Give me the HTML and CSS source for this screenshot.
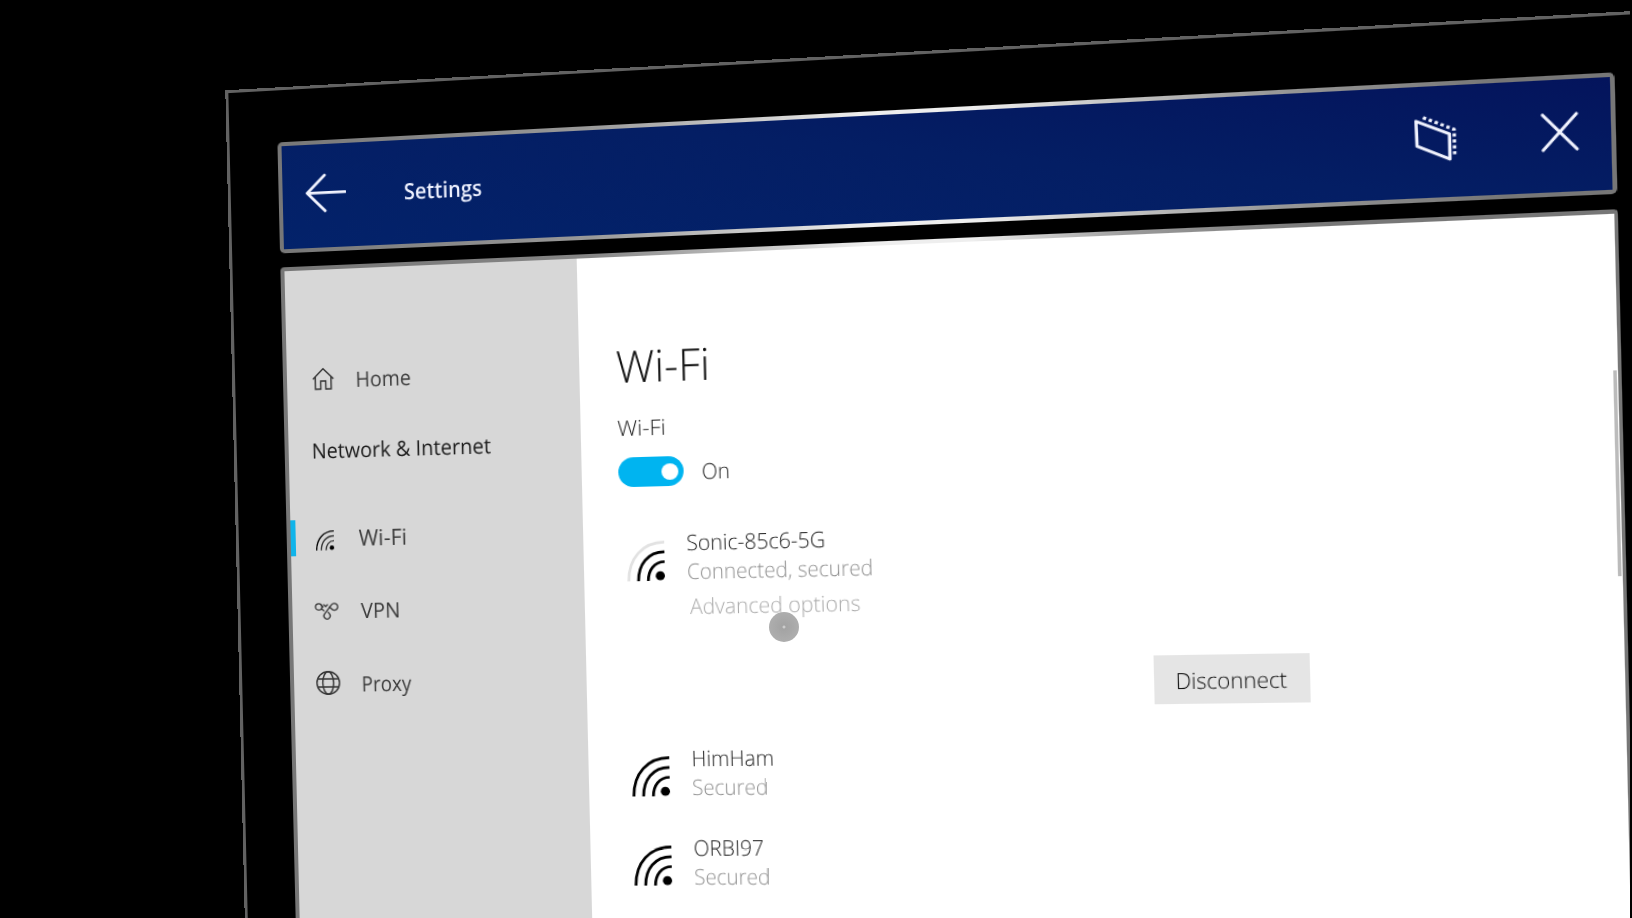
FILE: index.html
```html
<!DOCTYPE html>
<html lang="en">
<head>
<meta charset="utf-8">
<title>Settings</title>
<link rel="stylesheet" href="styles.css">
</head>
<body>
<svg class="defs" width="0" height="0">
  <symbol id="wifi" viewBox="0 0 36 40">
    <path class="arc-far" d="M1.2 39.5C1.2 17 15 1.4 36 1.4"/>
    <path d="M10.6 39.5C10.6 23 20 11 36 11"/>
    <path d="M20 39.5C20 29 26 20.8 36 20.8"/>
    <circle cx="31.6" cy="34.6" r="4.4" fill="#000" stroke="none"/>
  </symbol>
</svg>
<div class="view">
<div class="stage">
  <header class="bar">
    <div class="bar-face">
      <svg class="back" viewBox="0 0 42 42"><path d="M20.5 3 2.5 20.8 20.5 39.5M2.5 20.8H41"/></svg>
      <span class="title fit">Settings</span>
      <svg class="follow" viewBox="0 0 38 44">
        <path d="M2 4.8 31 18.2V42L2.5 28.5Z"/>
        <path class="dots" d="M8.2 1.6 35.2 14.2V37.5"/>
      </svg>
      <svg class="close" viewBox="0 0 32 36"><path d="M1.8 1.8 30.2 34.2M30.2 1.8 1.8 34.2"/></svg>
    </div>
  </header>
  <div class="panel">
    <nav class="side">
      <div class="item home"><svg viewBox="0 0 24 24"><path d="M1.8 12 12 1.8 22.2 12M4.2 10V22H9.5V14H14.5V22H19.8V10"/></svg><span class="fit">Home</span></div>
      <div class="group"><span class="fit">Network &amp; Internet</span></div>
      <div class="item current"><svg class="side-wifi" viewBox="0 0 36 40"><use href="#wifi"/></svg><span class="fit wide">Wi-Fi</span></div>
      <div class="item"><svg class="side-vpn" viewBox="0 0 24 24"><circle cx="4.3" cy="8" r="3.2"/><path d="M7 9.8 9.6 12.4M9 5.6 11.2 7.8 13.4 5.6M6.6 6.2 9 8.4"/><path d="M9.8 15.4 17 6.2A3.4 3.4 0 1 1 17 10.2L14.6 7.8M9.8 15.4A3.1 3.1 0 1 0 14.8 15.2L13.2 13.2"/></svg><span class="fit vpn">VPN</span></div>
      <div class="item"><svg viewBox="0 0 24 24"><circle cx="12" cy="12" r="11.2"/><ellipse cx="12" cy="12" rx="5.4" ry="11.2"/><path d="M1.8 8H22.2M1.8 16H22.2"/></svg><span class="fit proxy">Proxy</span></div>
    </nav>
    <main class="main">
      <h1><span class="fit">Wi-Fi</span></h1>
      <div class="label"><span class="fit label-text">Wi-Fi</span></div>
      <div class="switch"><span class="toggle"><i></i></span><span class="fit on">On</span></div>
      <section class="net weak">
        <svg class="signal"><use href="#wifi"/></svg>
        <div>
          <p class="name"><span class="fit sonic">Sonic-85c6-5G</span></p>
          <p class="state"><span class="fit">Connected, secured</span></p>
          <p class="more"><span class="fit">Advanced options</span></p>
        </div>
      </section>
      <button class="drop"><span class="fit">Disconnect</span></button>
      <section class="net">
        <svg class="signal"><use href="#wifi"/></svg>
        <div><p class="name"><span class="fit">HimHam</span></p><p class="state"><span class="fit">Secured</span></p></div>
      </section>
      <section class="net">
        <svg class="signal"><use href="#wifi"/></svg>
        <div><p class="name"><span class="fit">ORBI97</span></p><p class="state"><span class="fit">Secured</span></p></div>
      </section>
    </main>
    <div class="scroll"></div>
  </div>
</div>
<div class="cursor"></div>
<div class="edge"></div>
</div>
</body>
</html>
```
FILE: styles.css
```css
* { box-sizing: border-box; }
html, body { margin: 0; height: 918px; overflow: hidden; background: #000; }
body { font: 21px/28.2px "Open Sans", "Noto Sans", sans-serif; color: #3c3c3c; }
p, h1 { margin: 0; }
svg { display: block; flex: none; fill: none; stroke: #333; }
.defs { position: absolute; }
.view { position: relative; width: 1632px; height: 918px; overflow: hidden; }
.arc-far { stroke: var(--far, #000); }

/* The whole window is one plane seen in perspective. */
.stage {
  width: 1300px; height: 900px;
  padding: 52.3px 0 0 48px;
  border: solid #626262; border-width: 3px 0 0 3px;
  transform-origin: 0 0;
  transform: matrix3d(0.977, -0.062323, 0, -0.000070725, 0.023417, 0.99645, 0, 0, 0, 0, 1, 0, 225.3, 90.3, 0, 1);
}
.fit { display: inline-block; white-space: nowrap; transform: scaleX(.932); transform-origin: 0 50%; }
.fit.wide { transform: scaleX(1); }

.bar {
  width: 1221px; height: 111px; margin-top: -.8px; padding: 4px; border-radius: 5px;
  background: linear-gradient(90deg, #777 0%, #999 25%, #eee 46%, #eee 54%, #999 76%, #777 92%);
}
.bar-face {
  height: 100%; display: flex; align-items: center;
  padding: 0 27.4px 4.6px 22px;
  background: linear-gradient(8deg, #03226a, #041e64 55%, #04145c);
}
.bar svg { stroke: #f2f4ff; stroke-width: 2.8; stroke-linecap: round; stroke-linejoin: round; }
.bar .back { width: 41px; height: 41px; margin-top: -1px; }
.title { margin-left: 56.6px; padding-top: 2.6px; font-size: 22px; font-weight: 600; color: #eef1ff; }
.title.fit { transform: scaleX(.895); }
.follow { width: 38px; height: 43px; margin-left: auto; }
.bar .dots { stroke-width: 3; stroke-dasharray: 3 2.6; stroke-linecap: butt; }
.bar .close { width: 32px; height: 36px; margin: -1px 0 0 69.8px; }

.panel {
  position: relative; display: flex;
  width: 1221px; height: 744px; margin-top: 14.3px; padding: 4px 3.5px 0;
  border-radius: 4px 4px 0 0;
  background: linear-gradient(90deg, #777 0%, #858585 25%, #eee 46%, #eee 54%, #999 66%, #777 80%);
}
.side { width: 286.4px; padding-top: 94.6px; background: #d7d7d7; line-height: 30px; }
.item { position: relative; display: flex; align-items: center; gap: 21.2px; height: 30px; padding-left: 22.8px; margin-bottom: 42.6px; }
.item svg { width: 24px; height: 24px; stroke-width: 1.4; }
.item .fit, .group .fit { position: relative; top: .6px; }
.item.home { margin-bottom: 39.6px; padding-left: 24.4px; gap: 20.6px; }
.home .fit { transform: scaleX(.92); }
.group .fit { transform: scaleX(.934); }
.group { padding-left: 23px; height: 30px; margin-bottom: 58.2px; color: #1c1c1c; font-weight: 500; }
.current::before { content: ""; position: absolute; left: 0; top: -3.6px; width: 5.6px; height: 36px; background: #10b4ea; }
.item .side-wifi { width: 18px; height: 20px; margin: 5px 3.5px 0 2.5px; stroke-width: 2.6; }
.item .side-vpn { stroke-width: 1.3; margin-left: -.6px; margin-right: 1.4px; }
.fit.vpn { transform: scaleX(.95); }
.fit.proxy { transform: scaleX(.885); }

.main { flex: 1; padding: 79.2px 0 0 34.9px; background: #fff; font-weight: 300; color: #222; }
h1 { font-size: 43px; line-height: 56px; font-weight: 300; color: #111; margin-bottom: 17px; }
h1 .fit { transform: scaleX(.955); }
.label { line-height: 30px; margin-bottom: 14px; }
.fit.label-text { transform: scaleX(1.01); }
.switch { display: flex; gap: 17px; line-height: 31.4px; height: 30px; margin-bottom: 40.1px; }
.toggle { display: flex; align-items: center; justify-content: flex-end; width: 62.5px; height: 29.5px; padding-right: 5.6px; border-radius: 15px; background: #00b4f0; }
.toggle i { width: 16px; height: 16px; border-radius: 50%; background: #fff; }
.net { display: flex; gap: 19.8px; margin: 0 0 30.7px 6.6px; }
.signal { width: 36.4px; height: 39.5px; margin-top: 11.8px; stroke: #000; stroke-width: 2.7; }
.weak { --far: #e2e2e2; margin-bottom: 40.2px; }
.fit.sonic { transform: scaleX(.945); }
.state { color: #8e8e8e; }
.state .fit { transform: scaleX(.92); }
.more { color: #a8a8a8; margin: 6px 0 0 2px; }
.more .fit { transform: scaleX(.943); }
.drop { display: block; width: 137.4px; height: 46px; margin: 0 0 33px 488.1px; padding: 2.8px 0 0 19.4px; border: 0; background: #e5e5e5; font: inherit; color: #111; text-align: left; }
.scroll { position: absolute; right: 3.6px; top: 147px; width: 3px; height: 188.5px; background: #bbb; }

.cursor { position: absolute; left: 769px; top: 611.5px; width: 30px; height: 30px; border-radius: 50%; background: radial-gradient(circle, #ccc 0 .8px, #a3a3a3 2px, #adadad 14px); }
.edge { position: absolute; right: 0; top: 0; width: 2px; height: 918px; background: #000; }
```
